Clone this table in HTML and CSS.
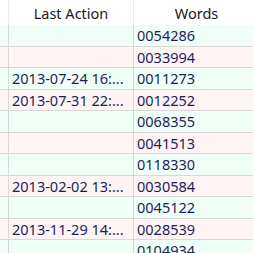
FILE: index.html
```html
<!DOCTYPE html>
<html>
<head>
<meta charset="utf-8">
<link rel="stylesheet" href="styles.css">
</head>
<body>
<div class="grid">
  <div class="row head">
    <div class="c0"></div>
    <div class="c1">Last Action</div>
    <div class="c2">Words</div>
  </div>
  <div class="row g"><div class="c0"></div><div class="c1"></div><div class="c2">0054286</div></div>
  <div class="row p"><div class="c0"></div><div class="c1"></div><div class="c2">0033994</div></div>
  <div class="row g"><div class="c0"></div><div class="c1">2013-07-24 16:...</div><div class="c2">0011273</div></div>
  <div class="row p"><div class="c0"></div><div class="c1">2013-07-31 22:...</div><div class="c2">0012252</div></div>
  <div class="row g"><div class="c0"></div><div class="c1"></div><div class="c2">0068355</div></div>
  <div class="row p"><div class="c0"></div><div class="c1"></div><div class="c2">0041513</div></div>
  <div class="row g"><div class="c0"></div><div class="c1"></div><div class="c2">0118330</div></div>
  <div class="row p"><div class="c0"></div><div class="c1">2013-02-02 13:...</div><div class="c2">0030584</div></div>
  <div class="row g"><div class="c0"></div><div class="c1"></div><div class="c2">0045122</div></div>
  <div class="row p"><div class="c0"></div><div class="c1">2013-11-29 14:...</div><div class="c2">0028539</div></div>
  <div class="row g"><div class="c0"></div><div class="c1"></div><div class="c2">0104934</div></div>
</div>
</body>
</html>
```
FILE: styles.css
```css
html, body { margin: 0; padding: 0; background: #fff; overflow: hidden; }
body { width: 253px; height: 253px; font-family: "Noto Sans", "Open Sans", sans-serif; font-size: 14.5px; }
.grid { display: flex; flex-direction: column; width: 260px; }
.row { display: grid; grid-template-columns: 9px 125px 126px; height: 21.5px; box-sizing: border-box; border-bottom: 1px solid #d8d8d8; }
.row > div { border-right: 1px solid #d8d8d8; box-sizing: border-box; display: flex; align-items: center; padding-left: 3px; color: #1e1e5a; white-space: nowrap; overflow: hidden; }
.row > .c0 { padding: 0; }
.head { height: 25px; background: #fff; border-bottom: none; }
.head > div { justify-content: center; padding: 0; color: #1a1a1a; border-right: 1px solid #ececec; }
.g { background: #effff7; }
.p { background: #fff4f4; }
```
